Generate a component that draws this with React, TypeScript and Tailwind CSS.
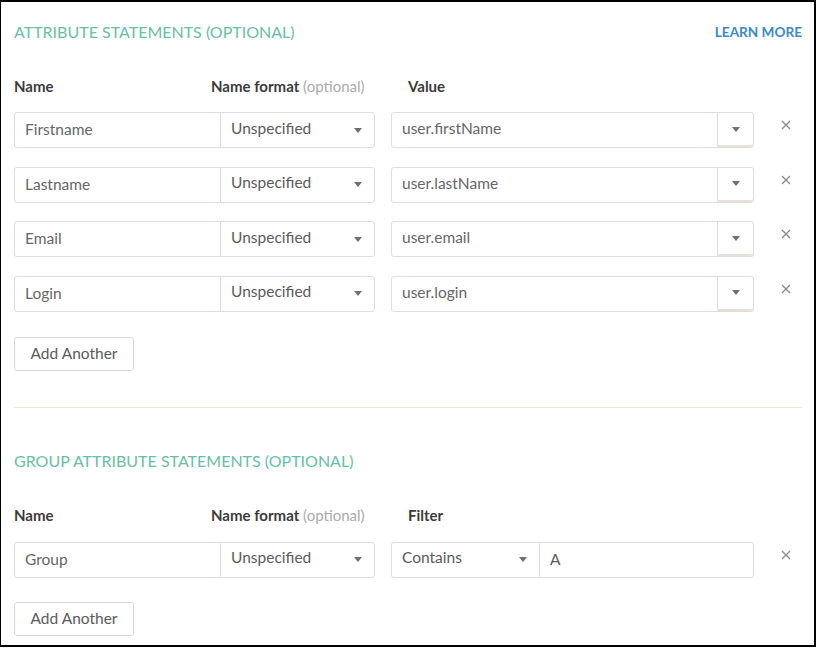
import React from 'react';

const font = { fontFamily: 'Lato, "Open Sans", Arial, sans-serif' };

const Caret: React.FC = () => (
  <svg width="8" height="5" viewBox="0 0 8 5" className="shrink-0">
    <path d="M0 0 L8 0 L4 5 Z" fill="#707070" />
  </svg>
);

const Remove: React.FC = () => (
  <button className="ml-[26px] w-[12px] shrink-0 flex justify-center items-center h-[30px] -mt-[2px]">
    <svg width="10" height="10" viewBox="0 0 10 10">
      <path d="M1 1 L9 9 M9 1 L1 9" stroke="#8a8a8a" strokeWidth="1.3" />
    </svg>
  </button>
);

const NameAndFormat: React.FC<{ name: string }> = ({ name }) => (
  <div className="flex shrink-0">
    <div className="w-[207px] h-[36px] border border-[#e3dada] rounded-l-[3px] flex items-center pl-[10px] text-[15.5px] text-[#666] bg-white">
      {name}
    </div>
    <div className="w-[155px] h-[36px] border border-[#e3dada] -ml-px rounded-r-[3px] flex items-center justify-between pl-[10px] pr-[12px] text-[15.5px] text-[#5a5a5a] bg-white">
      <span className="-mt-[3px]">Unspecified</span>
      <Caret />
    </div>
  </div>
);

const Labels: React.FC<{ third: string }> = ({ third }) => (
  <div className="flex text-[15px] leading-[20px] text-[#3b3b3b]">
    <div className="w-[197px] font-bold">Name</div>
    <div className="w-[197px] whitespace-nowrap">
      <span className="font-bold">Name format</span>{' '}
      <span className="text-[#ababab]">(optional)</span>
    </div>
    <div className="font-bold">{third}</div>
  </div>
);

const AddAnother: React.FC = () => (
  <button className="w-[120px] h-[34px] border border-[#e0d6d6] rounded-[3px] text-[15.5px] text-[#5a5a5a] bg-white">
    Add Another
  </button>
);

const attributes = [
  { name: 'Firstname', value: 'user.firstName' },
  { name: 'Lastname', value: 'user.lastName' },
  { name: 'Email', value: 'user.email' },
  { name: 'Login', value: 'user.login' },
];

export default function App() {
  return (
    <div
      style={font}
      className="w-[816px] h-[647px] border-l border-t-2 border-r-2 border-b-2 border-black bg-white pl-[13px] pr-[12px] pt-[20px] overflow-hidden"
    >
      {/* Attribute statements */}
      <div className="flex justify-between items-center h-[20px]">
        <h2 className="text-[16px] text-[#66c1a4]">ATTRIBUTE STATEMENTS (OPTIONAL)</h2>
        <a className="text-[13.6px] font-bold text-[#3a8bc4]">LEARN MORE</a>
      </div>

      <div className="mt-[34px]">
        <Labels third="Value" />
      </div>

      <div className="mt-[16px] flex flex-col gap-[18.5px]">
        {attributes.map((a) => (
          <div key={a.name} className="flex items-start">
            <NameAndFormat name={a.name} />
            <div className="ml-[16px] w-[363px] shrink-0 h-[36px] border border-[#e3dada] rounded-[3px] flex bg-white">
              <div className="flex-1 flex items-center pl-[10px] text-[15.5px] text-[#666]">
                <span className="-mt-[2px]">{a.value}</span>
              </div>
              <div className="w-[36px] border-l border-[#e3dada] border-b-2 border-b-[#e6e2d8] rounded-r-[3px] flex items-center justify-center">
                <Caret />
              </div>
            </div>
            <Remove />
          </div>
        ))}
      </div>

      <div className="mt-[25px]">
        <AddAnother />
      </div>

      <div className="mt-[36px] border-t border-[#ecead9]" />

      {/* Group attribute statements */}
      <h2 className="mt-[43px] h-[20px] leading-[20px] text-[16px] text-[#66c1a4]">
        GROUP ATTRIBUTE STATEMENTS (OPTIONAL)
      </h2>

      <div className="mt-[34px]">
        <Labels third="Filter" />
      </div>

      <div className="mt-[17px] flex items-start">
        <NameAndFormat name="Group" />
        <div className="ml-[16px] flex shrink-0">
          <div className="w-[149px] h-[36px] border border-[#e3dada] rounded-l-[3px] flex items-center justify-between pl-[10px] pr-[12px] text-[15.5px] text-[#5a5a5a] bg-white">
            <span className="-mt-[3px]">Contains</span>
            <Caret />
          </div>
          <div className="w-[215px] h-[36px] border border-[#e3dada] -ml-px rounded-r-[3px] flex items-center pl-[10px] text-[15.5px] text-[#5a5a5a] bg-white">
            A
          </div>
        </div>
        <Remove />
      </div>

      <div className="mt-[24px]">
        <AddAnother />
      </div>
    </div>
  );
}
